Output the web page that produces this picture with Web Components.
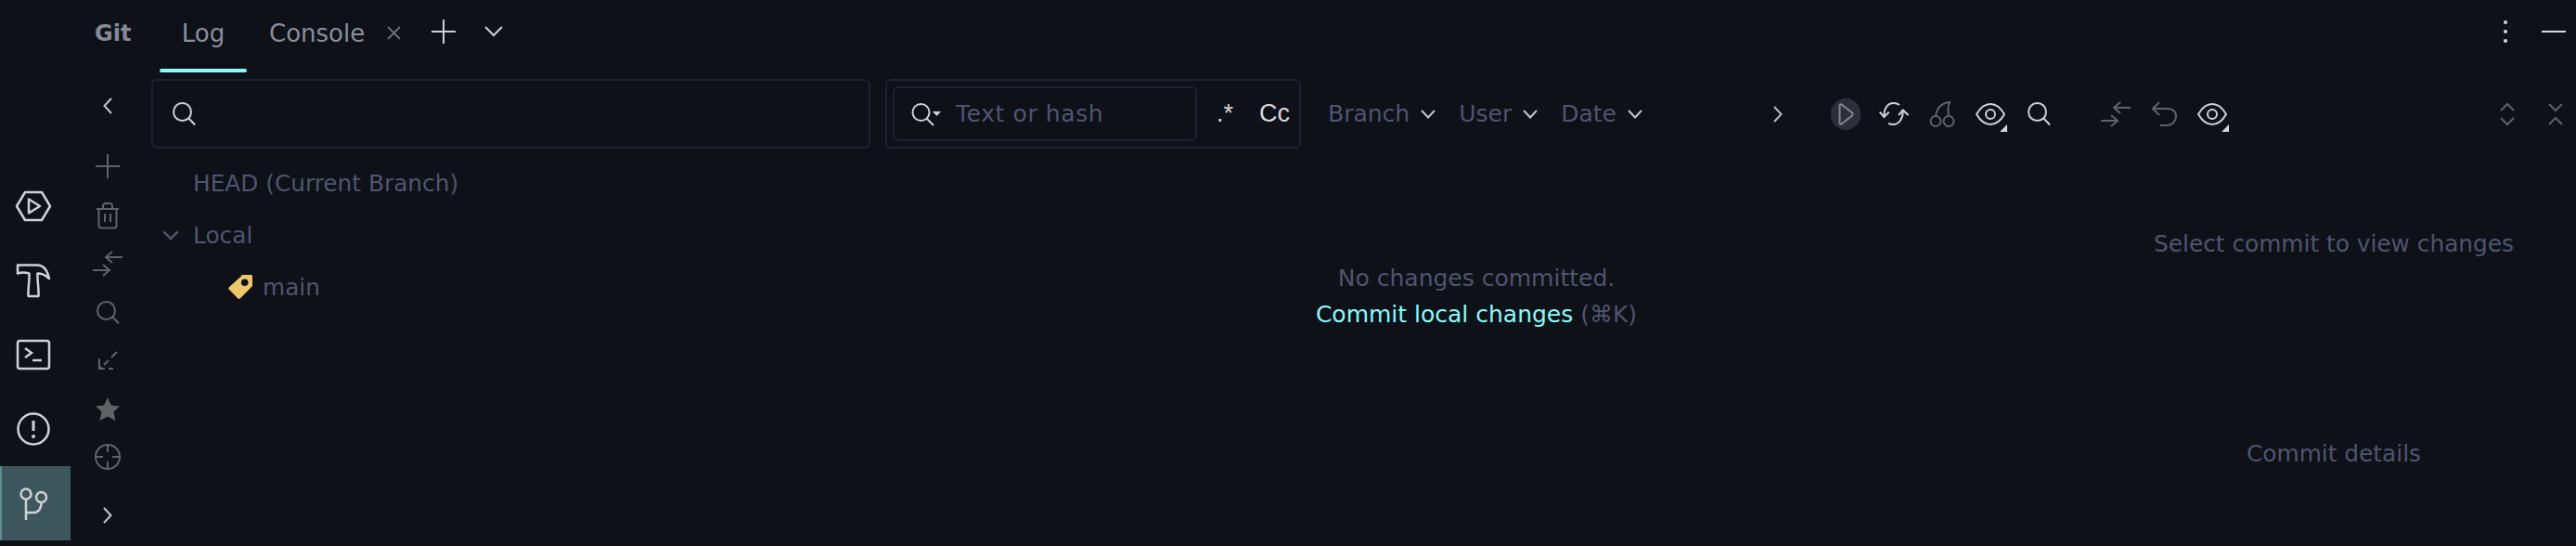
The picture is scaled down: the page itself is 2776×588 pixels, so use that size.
<!DOCTYPE html>
<html>
<head>
<meta charset="utf-8">
<style>
  html, body { margin: 0; height: 100%; background: #0e1118; overflow: hidden; }
  body { font-family: "DejaVu Sans", sans-serif; }
</style>
</head>
<body>
<git-window></git-window>
<script>
// icon paths, all drawn on a box the same size in px as on screen
const ICONS = {
  hex: [38, 34, '<path d="M10 2H28L37 17L28 32H10L1 17Z" stroke-linejoin="round"/><path d="M14 9.5V24.5L26 17Z" stroke-linejoin="round"/>'],
  hammer: [36, 36, '<path d="M1 1.5H22C29 1.5 33 7 35 16C31 12 27 10.5 22.5 10.5C22 17 24 28 23.5 35H12.5C12 28 14 17 13.5 10.5C9 9 5 9 1 10.5Z" stroke-linejoin="round"/>'],
  term: [36, 32, '<rect x="1" y="1" width="34" height="30" rx="2.5"/><path d="M9 9L16 14L9 19" /><path d="M17 22H27"/>'],
  warn: [36, 36, '<circle cx="18" cy="18" r="16.5"/><path d="M18 9V20" stroke-width="3"/><circle cx="18" cy="26" r="2" fill="currentColor" stroke="none"/>'],
  branch: [31, 36, '<circle cx="7" cy="8" r="5.5"/><circle cx="23.5" cy="11.5" r="5.5"/><path d="M7 13.5V36"/><path d="M7 28H15C20 28 23.5 24 23.5 17"/>'],
  left: [10, 18, '<path d="M9 1L1.5 9L9 17"/>'],
  right: [10, 18, '<path d="M1 1L8.5 9L1 17"/>'],
  plus: [26, 26, '<path d="M13 0V26M0 13H26"/>'],
  trash: [24, 28, '<path d="M0 7H24M2.5 7V25C2.5 26.5 3.5 27.5 5 27.5H19C20.5 27.5 21.5 26.5 21.5 25V7M7 7V4C7 2 8.5 1 10 1H14C15.5 1 17 2 17 4V7M9 12V21M15 12V21"/>'],
  swap: [32, 28, '<path d="M32 7H14M21 1L14 7L21 13"/><path d="M0 21H18M11 15L18 21L11 27"/>'],
  search: [24, 25, '<circle cx="10.5" cy="10.5" r="9.5"/><path d="M17.5 17.5L24 24.5"/>'],
  diff: [20, 20, '<path d="M20 1L14 7M11 10L6 15M1 8V19H7M11 19H16"/><path d="M1 19L3 17"/>'],
  star: [26, 25, '<path d="M13 0L17 8.5L26 9.5L19.5 15.5L21.5 25L13 20.5L4.5 25L6.5 15.5L0 9.5L9 8.5Z" fill="currentColor" stroke="none"/>'],
  target: [28, 28, '<circle cx="14" cy="14" r="13"/><path d="M14 1V9M14 19V27M1 14H9M19 14H27"/>'],
  close: [15, 15, '<path d="M1 1L14 14M14 1L1 14"/>'],
  down: [20, 11, '<path d="M1 1L10 10L19 1"/>'],
  down2: [18, 11, '<path d="M1.5 1.5L9 9L16.5 1.5" stroke-width="2.5"/>'],
  chev: [16, 10, '<path d="M1 1L8 8.5L15 1"/>'],
  tag: [26, 26, '<path d="M14 1.5C14 .7 14.7 0 15.5 0H24.5C25.3 0 26 .7 26 1.5V12L13 25.3C12.2 26.2 11 26.2 10.2 25.3L.8 15.8C0 15 0 14 .8 13.2Z" fill="#edc76a" stroke="none"/><circle cx="17.7" cy="8.3" r="3.8" fill="#0e1118" stroke="none"/>'],
  searchdrop: [32, 24, '<circle cx="10.5" cy="10" r="9"/><path d="M17 17L24 24"/><path d="M23 9H32L27.5 14Z" fill="currentColor" stroke="none"/>'],
  play: [16, 24, '<path d="M1.5 2.5C1.5 1.5 2.5 1 3.5 1.5L15 10.5C16 11.3 16 12.7 15 13.5L3.5 22.5C2.5 23 1.5 22.5 1.5 21.5Z" stroke-linejoin="round"/>'],
  sync: [32, 25, '<path d="M22 3C20 1.5 17.5 1 15.5 1C9 1 5.3 7 5.3 15"/><path d="M.7 10.7L5.3 16L10.7 10.7"/><path d="M25.7 10C25.7 18 21 24 15.5 24C13.5 24 12 23.7 10 23"/><path d="M21 14L25.7 8.5L31.5 14"/>'],
  cherry: [26, 28, '<circle cx="6" cy="21.5" r="5.5"/><circle cx="20" cy="21.5" r="5.5"/><path d="M6 16C7 8 12 2 21 1C19 6 19 11 20 16"/>'],
  eye: [32, 24, '<path d="M1 12C5 5 10 1 16 1C22 1 27 5 31 12C27 19 22 23 16 23C10 23 5 19 1 12Z"/><circle cx="16" cy="12" r="5"/>'],
  undo: [27, 27, '<path d="M8 1L1 8L8 15"/><path d="M1 8H17C22 8 26 11 26 16C26 21 22 26 17 26H9"/>'],
  updown: [16, 26, '<path d="M1 9L8 2L15 9M1 17L8 24L15 17"/>'],
  downup: [16, 24, '<path d="M1 1L8 8L15 1M1 23L8 16L15 23"/>'],
};

class IdeIcon extends HTMLElement {
  constructor() {
    super();
    this.attachShadow({mode: 'open'});
  }
  connectedCallback() {
    const [w, h, body] = ICONS[this.getAttribute('name')];
    const sw = this.getAttribute('sw') || 2;
    const drop = this.hasAttribute('drop')
      ? '<i></i>' : '';
    this.shadowRoot.innerHTML = `<style>
      :host { display: inline-flex; position: relative; flex: none; color: var(--icon, #cfd1d6); }
      svg { display: block; overflow: visible; }
      i { position: absolute; right: -2px; bottom: -7px; width: 0; height: 0;
          border-left: 8px solid transparent; border-bottom: 8px solid #d4d5d8; }
    </style><svg width="${w}" height="${h}" viewBox="0 0 ${w} ${h}" fill="none" stroke="currentColor" stroke-width="${sw}">${body}</svg>${drop}`;
  }
}
customElements.define('ide-icon', IdeIcon);

class ToolRail extends HTMLElement {
  constructor() {
    super();
    this.attachShadow({mode: 'open'}).innerHTML = `<style>
      :host { display: flex; flex-direction: column; align-items: stretch; width: 76px; flex: none; padding-top: 205px; box-sizing: border-box; }
      .item { display: flex; justify-content: center; align-items: flex-start; padding-right: 4px; }
      .a { height: 79px; } .b { height: 82px; } .c { height: 78px; } .d { height: 58px; }
      .active { height: 80px; background: #3d565d; border-left: 2px solid #5e8a91; box-sizing: border-box; align-items: center; padding-right: 6px; }
    </style>
    <div class="item a"><ide-icon name="hex" sw="2.5"></ide-icon></div>
    <div class="item b"><ide-icon name="hammer" sw="2.5"></ide-icon></div>
    <div class="item c"><ide-icon name="term" sw="2.5"></ide-icon></div>
    <div class="item d"><ide-icon name="warn" sw="2.5"></ide-icon></div>
    <div class="item active"><ide-icon name="branch" sw="2.5"></ide-icon></div>`;
  }
}
customElements.define('tool-rail', ToolRail);

class TabBar extends HTMLElement {
  constructor() {
    super();
    this.attachShadow({mode: 'open'}).innerHTML = `<style>
      :host { display: flex; align-items: center; height: 85px; font-size: 26px; color: #8b8e9d; position: relative; }
      .title { font-weight: 700; font-size: 24px; width: 70px; margin-left: 26px; color: #868997; padding-bottom: 14px; }
      .tab { position: relative; display: flex; align-items: center; height: 85px; box-sizing: border-box; padding-bottom: 14px; }
      .log { width: 94px; justify-content: center; }
      .log::after { content: ""; position: absolute; left: 0; right: 0; top: 74px; height: 4px; border-radius: 2px; background: #8bfbfb; }
      .console { margin-left: 24px; }
      .x { margin-left: 24px; margin-bottom: 14px; --icon: #6f7179; }
      .tools { display: flex; align-items: center; padding-bottom: 18px; }
      .end { margin-left: auto; display: flex; align-items: center; padding-bottom: 17px; }
      .dots { display: grid; gap: 6px; margin-right: 37px; }
      .dots b { width: 4px; height: 4px; border-radius: 50%; background: #d8d9dc; }
      .min { width: 26px; height: 2px; background: #d8d9dc; margin-right: 11px; }
    </style>
    <span class="title">Git</span>
    <span class="tab log">Log</span>
    <span class="tab console">Console</span>
    <ide-icon class="x" name="close" sw="1.8"></ide-icon>
    <div class="tools">
      <ide-icon style="margin-left:33px" name="plus"></ide-icon>
      <ide-icon style="margin-left:31px" name="down"></ide-icon>
    </div>
    <div class="end">
      <div class="dots"><b></b><b></b><b></b></div>
      <div class="min"></div>
    </div>`;
  }
}
customElements.define('tab-bar', TabBar);

class SideActions extends HTMLElement {
  constructor() {
    super();
    this.attachShadow({mode: 'open'}).innerHTML = `<style>
      :host { display: flex; flex-direction: column; align-items: center; width: 87px; padding-right: 7px; box-sizing: border-box; flex: none; --icon: #616264; }
      .light { --icon: #c4c5c9; }
    </style>
    <ide-icon class="light" name="left" style="margin-top:20px"></ide-icon>
    <ide-icon name="plus" style="margin-top:43px"></ide-icon>
    <ide-icon name="trash" style="margin-top:26px"></ide-icon>
    <ide-icon name="swap" style="margin-top:24px"></ide-icon>
    <ide-icon name="search" style="margin-top:26px"></ide-icon>
    <ide-icon name="diff" style="margin-top:29px"></ide-icon>
    <ide-icon name="star" style="margin-top:30px"></ide-icon>
    <ide-icon name="target" style="margin-top:25px"></ide-icon>
    <ide-icon class="light" name="right" style="margin-top:40px"></ide-icon>`;
  }
}
customElements.define('side-actions', SideActions);

class BranchTree extends HTMLElement {
  constructor() {
    super();
    this.attachShadow({mode: 'open'}).innerHTML = `<style>
      :host { display: block; width: 775px; flex: none; color: #50546f; font-size: 24.8px; }
      .search { height: 75px; border: 2px solid #1f222e; border-radius: 6px; box-sizing: border-box; display: flex; align-items: center; padding-left: 21px; }
      .row { height: 56px; display: flex; align-items: center; white-space: nowrap; }
      .head { padding-left: 45px; margin-top: 9px; }
      .local { padding-left: 12px; }
      .local span { margin-left: 15px; }
      .leaf { padding-left: 83px; }
      .leaf span { margin-left: 11px; }
      .tw { --icon: #50546f; }
    </style>
    <div class="search"><ide-icon name="search"></ide-icon></div>
    <div class="row head">HEAD (Current Branch)</div>
    <div class="row local"><ide-icon class="tw" name="down2"></ide-icon><span>Local</span></div>
    <div class="row leaf"><ide-icon name="tag"></ide-icon><span>main</span></div>`;
  }
}
customElements.define('branch-tree', BranchTree);

class LogFilter extends HTMLElement {
  constructor() {
    super();
    this.attachShadow({mode: 'open'}).innerHTML = `<style>
      :host { display: inline-flex; align-items: center; gap: 12px; color: #50546f; font-size: 25px; --icon: #c4c5c9; }
    </style><slot></slot><ide-icon name="chev"></ide-icon>`;
  }
}
customElements.define('log-filter', LogFilter);

class LogPanel extends HTMLElement {
  constructor() {
    super();
    this.attachShadow({mode: 'open'}).innerHTML = `<style>
      :host { display: flex; flex-direction: column; flex: 1; min-width: 0; color: #50546f; font-size: 25px; }
      .bar { display: flex; align-items: center; height: 75px; }
      .box { width: 448px; height: 75px; box-sizing: border-box; border: 2px solid #1f222e; border-radius: 6px; display: flex; align-items: center; padding-left: 6px; flex: none; }
      .field { width: 328px; height: 59px; box-sizing: border-box; border: 2px solid #1f222e; border-radius: 6px; display: flex; align-items: center; padding-left: 18px; gap: 16px; letter-spacing: .6px; }
      .opt { color: #d6d7da; font-family: "Liberation Sans", sans-serif; font-size: 27px; }
      .filters { display: flex; gap: 25px; margin-left: 29px; }
      .r { display: flex; align-items: center; margin-left: 141px; }
      .pill { width: 32px; height: 34px; border-radius: 16px; background: #2c2f38; display: flex; align-items: center; justify-content: center; --icon: #85878c; }
      .dim { --icon: #616264; }
      .empty { text-align: center; margin-top: 120px; line-height: 39px; white-space: nowrap; padding-right: 20px; }
      .link { color: #8bfbfb; }
    </style>
    <div class="bar">
      <div class="box">
        <div class="field"><ide-icon name="searchdrop"></ide-icon>Text or hash</div>
        <span class="opt" style="margin-left:21px">.*</span>
        <span class="opt" style="margin-left:28px">Cc</span>
      </div>
      <div class="filters">
        <log-filter>Branch</log-filter>
        <log-filter>User</log-filter>
        <log-filter>Date</log-filter>
      </div>
      <div class="r">
        <ide-icon name="right" style="--icon:#b9bbc0"></ide-icon>
        <div class="pill" style="margin-left:52px"><ide-icon name="play"></ide-icon></div>
        <ide-icon name="sync" style="margin-left:20px"></ide-icon>
        <ide-icon class="dim" name="cherry" style="margin-left:23px"></ide-icon>
        <ide-icon name="eye" drop style="margin-left:23px"></ide-icon>
        <ide-icon name="search" style="margin-left:24px"></ide-icon>
      </div>
    </div>
    <div class="empty">
      <div>No changes committed.</div>
      <div><span class="link">Commit local changes</span> (⌘K)</div>
    </div>`;
  }
}
customElements.define('log-panel', LogPanel);

class DetailPanel extends HTMLElement {
  constructor() {
    super();
    this.attachShadow({mode: 'open'}).innerHTML = `<style>
      :host { display: flex; flex-direction: column; width: 498px; flex: none; color: #50546f; font-size: 24.8px; }
      .bar { display: flex; align-items: center; height: 75px; }
      .dim { --icon: #616264; }
      .a { margin-top: 88px; text-align: center; padding-left: 4px; white-space: nowrap; }
      .b { height: 422px; display: flex; align-items: center; justify-content: center; padding-left: 4px; }
    </style>
    <div class="bar">
      <ide-icon class="dim" name="swap"></ide-icon>
      <ide-icon class="dim" name="undo" style="margin-left:23px"></ide-icon>
      <ide-icon name="eye" drop style="margin-left:22px"></ide-icon>
      <ide-icon class="dim" name="updown" style="margin-left:294px"></ide-icon>
      <ide-icon class="dim" name="downup" style="margin-left:36px"></ide-icon>
    </div>
    <div class="a">Select commit to view changes</div>
    <div class="b">Commit details</div>`;
  }
}
customElements.define('detail-panel', DetailPanel);

class GitWindow extends HTMLElement {
  constructor() {
    super();
    this.attachShadow({mode: 'open'}).innerHTML = `<style>
      :host { display: flex; height: 588px; width: 2776px; background: #0e1118; overflow: hidden; }
      .main { flex: 1; min-width: 0; display: flex; flex-direction: column; }
      .body { display: flex; }
      .log { flex: 1; display: flex; min-width: 0; gap: 16px; padding-right: 14px; }
    </style>
    <tool-rail></tool-rail>
    <div class="main">
      <tab-bar></tab-bar>
      <div class="body">
        <side-actions></side-actions>
        <div class="log">
          <branch-tree></branch-tree>
          <log-panel></log-panel>
          <detail-panel></detail-panel>
        </div>
      </div>
    </div>`;
  }
}
customElements.define('git-window', GitWindow);
</script>
</body>
</html>
